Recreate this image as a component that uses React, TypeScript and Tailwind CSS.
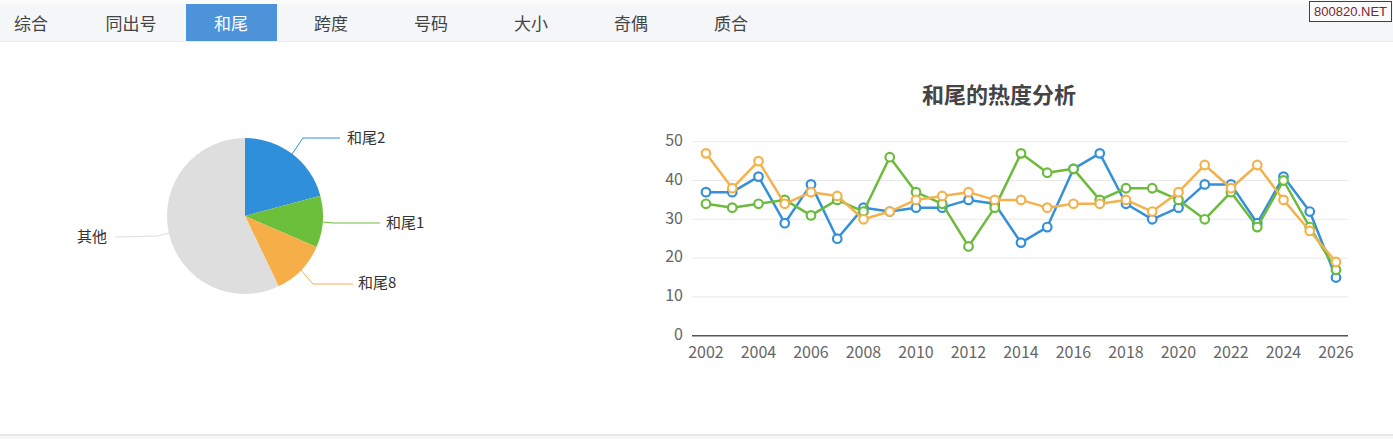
const tabs = ["综合", "同出号", "和尾", "跨度", "号码", "大小", "奇偶", "质合"];

const pieSlices = [
  { name: "和尾2", value: 20.8, color: "#2f8fdb" },
  { name: "和尾1", value: 10.7, color: "#6cbf3a" },
  { name: "和尾8", value: 11.4, color: "#f5ae48" },
  { name: "其他", value: 57.1, color: "#dedede" },
];

const pieLabels = [
  { text: "和尾2", pts: "292,112 303,96 340,96", x: 347, y: 97, color: "#2f8fdb", anchor: "start" },
  { text: "和尾1", pts: "323,180 333,181 380,181", x: 386, y: 182, color: "#6cbf3a", anchor: "start" },
  { text: "和尾8", pts: "301,228 313,242 353,242", x: 358, y: 242, color: "#f5ae48", anchor: "start" },
  { text: "其他", pts: "169,191 157,194 115,195", x: 107, y: 196, color: "#dddddd", anchor: "end" },
];

const series = [
  {
    color: "#3590da",
    data: [37, 37, 41, 29, 39, 25, 33, 32, 33, 33, 35, 34, 24, 28, 43, 47, 34, 30, 33, 39, 39, 29, 41, 32, 15],
  },
  {
    color: "#6cbb3c",
    data: [34, 33, 34, 35, 31, 35, 32, 46, 37, 34, 23, 33, 47, 42, 43, 35, 38, 38, 35, 30, 37, 28, 40, 28, 17],
  },
  {
    color: "#f4b24e",
    data: [47, 38, 45, 34, 37, 36, 30, 32, 35, 36, 37, 35, 35, 33, 34, 34, 35, 32, 37, 44, 38, 44, 35, 27, 19],
  },
];

const CX = 245;
const CY = 174;
const R = 78;

function polar(deg: number, r: number) {
  const a = ((deg - 90) * Math.PI) / 180;
  return [CX + r * Math.cos(a), CY + r * Math.sin(a)];
}

function slicePath(start: number, end: number) {
  const [x1, y1] = polar(start, R);
  const [x2, y2] = polar(end, R);
  const large = end - start > 180 ? 1 : 0;
  return `M${CX},${CY} L${x1},${y1} A${R},${R} 0 ${large} 1 ${x2},${y2} Z`;
}

function PieChart() {
  let acc = 0;
  return (
    <svg width="640" height="392" className="block">
      {pieSlices.map((s) => {
        const start = acc;
        acc += (s.value / 100) * 360;
        return <path key={s.name} d={slicePath(start, acc)} fill={s.color} />;
      })}
      {pieLabels.map((l) => (
        <g key={l.text}>
          <polyline points={l.pts} fill="none" stroke={l.color} strokeWidth="1" />
          <text x={l.x} y={l.y} dominantBaseline="middle" textAnchor={l.anchor} className="fill-[#333] text-[15px]">
            {l.text}
          </text>
        </g>
      ))}
    </svg>
  );
}

const px = (i: number) => 66 + 26.25 * i;
const py = (v: number) => 293.7 - 3.88 * v;

function LineChart() {
  return (
    <svg width="753" height="392" className="block">
      <text x="359" y="55" textAnchor="middle" dominantBaseline="middle" className="fill-[#444] text-[22px] font-bold">
        和尾的热度分析
      </text>
      {[10, 20, 30, 40, 50].map((v) => (
        <line key={v} x1="52" x2="708" y1={py(v)} y2={py(v)} stroke="#e9e9e9" strokeWidth="1" />
      ))}
      <line x1="52" x2="708" y1={py(0)} y2={py(0)} stroke="#555" strokeWidth="1.5" />
      {[0, 10, 20, 30, 40, 50].map((v) => (
        <text key={v} x="43" y={py(v)} textAnchor="end" dominantBaseline="middle" className="fill-[#666] text-[16px]">
          {v}
        </text>
      ))}
      {Array.from({ length: 13 }, (_, k) => k * 2).map((i) => (
        <text key={i} x={px(i)} y="312" textAnchor="middle" dominantBaseline="middle" className="fill-[#666] text-[16px]">
          {2002 + i}
        </text>
      ))}
      {series.map((s, si) => (
        <g key={si}>
          <polyline
            points={s.data.map((v, i) => `${px(i)},${py(v)}`).join(" ")}
            fill="none"
            stroke={s.color}
            strokeWidth="2.5"
            strokeLinejoin="round"
          />
          {s.data.map((v, i) => (
            <circle key={i} cx={px(i)} cy={py(v)} r="4.3" fill="#fff" stroke={s.color} strokeWidth="2.2" />
          ))}
        </g>
      ))}
    </svg>
  );
}

export default function App() {
  return (
    <div className="relative w-[1393px] h-[439px] bg-white overflow-hidden font-['Noto_Sans_CJK_SC','Noto_Sans',sans-serif]">
      {/* Tabs */}
      <div className="h-[42px] border-t-[4px] border-b border-t-[#fbfbfb] border-b-[#ebebeb] bg-[#f5f6f7]">
        <div className="flex h-full -ml-[19px]">
          {tabs.map((t) => (
            <div key={t} className="w-[100px] flex justify-center h-full">
              <div
                className={
                  t === "和尾"
                    ? "w-[91px] h-full flex items-center justify-center bg-[#4d93da] text-white text-[17px]"
                    : "w-[91px] h-full flex items-center justify-center text-[#444] text-[17px]"
                }
              >
                {t}
              </div>
            </div>
          ))}
        </div>
      </div>

      {/* Charts */}
      <div className="flex h-[392px]">
        <div className="w-[640px]">
          <PieChart />
        </div>
        <div className="flex-1">
          <LineChart />
        </div>
      </div>

      <div className="h-[2px] bg-[#e8e8e8]" />
      <div className="h-[3px] bg-[#f6f6f6]" />

      {/* Watermark */}
      <div className="absolute right-[1px] top-[1px] h-[21px] px-[4px] flex items-center border border-[#7b2530] bg-[#fafafa] text-[#7b2530] text-[13px] font-['Liberation_Sans',sans-serif] leading-none">
        800820.NET
      </div>
    </div>
  );
}
